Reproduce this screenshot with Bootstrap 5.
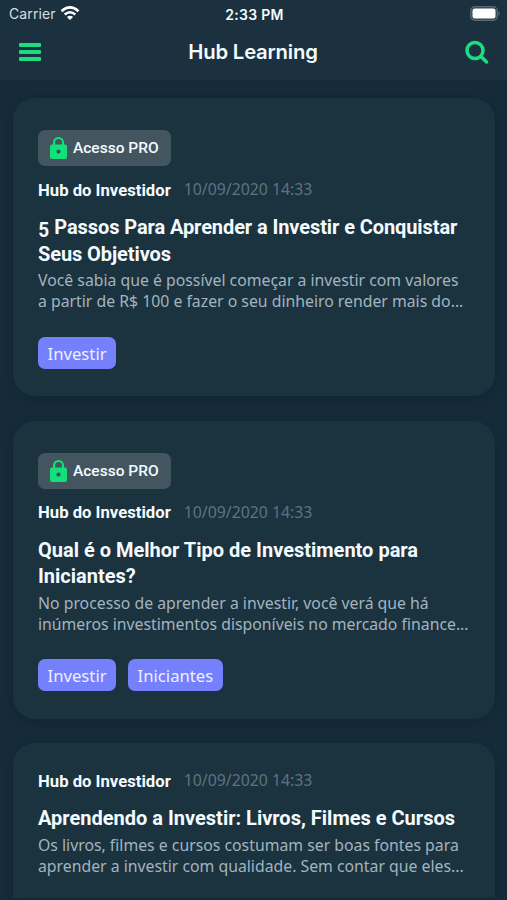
<!DOCTYPE html>
<html lang="pt-BR">
<head>
<meta charset="utf-8">
<meta name="viewport" content="width=device-width, initial-scale=1">
<title>Hub Learning</title>
<link href="https://cdn.jsdelivr.net/npm/bootstrap@5.3.0/dist/css/bootstrap.min.css" rel="stylesheet">
<style>
body{background:#152b3a;color:#f4fbff;font-family:"Noto Sans","Open Sans",sans-serif;height:900px;overflow:hidden}
.top-area{background:#1b313f;height:80px;font-family:Inter,sans-serif}
.status{height:27px;font-size:14px;padding:0 7px 0 9px}
.status>div{flex:1 1 0}
.carrier{color:#d5dfe5;letter-spacing:.1px}
.clock{font-weight:600;font-size:14px;letter-spacing:.3px;padding-top:1px}
.app-bar{height:50px;padding:0 18px 0 19px}
.app-title{font-size:20.3px;font-weight:600;letter-spacing:-.2px}
.feed{padding:18px 12px 0 13px;gap:24.5px;height:820px;overflow:hidden}
.post{background:#1b323f;border-radius:22px;height:298px;padding:32px 25px 0;box-shadow:0 3px 10px rgba(8,24,34,.22);flex:none}
.post-free{padding-top:26px;height:155px;border-bottom-left-radius:0;border-bottom-right-radius:0}
.pro{background:#435660;border-radius:7px;height:36px;width:133px;padding-left:12px;gap:6px;font:500 15.5px Roboto,sans-serif;margin-bottom:12px}
.meta{height:24px;gap:13px;font-size:15.8px;color:#5f727e}
.author{font:700 16.7px Roboto,sans-serif;color:#f4fbff}
.headline{font:700 20px/26.5px Roboto,sans-serif;margin:12px 0 3px}
.tight{letter-spacing:-.09px}
.low-digit{display:inline-block;transform:translateY(3px) scaleX(.95)}
.summary{font-size:15.8px;line-height:21.3px;color:#a3b4bf;margin:0 0 24px}
.headline,.summary{white-space:nowrap}
.tags{gap:12px}
.tag{background:#7480fc;color:#edf0ff;border-radius:7px;height:32px;padding:1px 9.500px 0;font-size:16.7px}
</style>
</head>
<body>
<header class="top-area">
  <div class="status d-flex align-items-center">
    <div class="d-flex align-items-center gap-1"><span class="carrier">Carrier</span>
      <svg width="20" height="15" viewBox="0 0 20 15" fill="none" stroke="#fff" stroke-width="2.5"><path d="M1.5 5.2Q10-2.4 18.500 5.2M4.700 8.500Q10 3.900 15.300 8.500"/><path d="M10 14 6.900 10.900Q10 8.400 13.100 10.900Z" fill="#fff" stroke="none"/></svg>
    </div>
    <span class="clock">2:33 PM</span>
    <div class="d-flex justify-content-end">
      <svg width="30" height="15" viewBox="0 0 30 15"><rect x=".7" y=".7" width="26.600" height="13.600" rx="4.300" fill="#31444f" stroke="#5b6b75" stroke-width="1.200"/><rect x="2.500" y="2.500" width="23" height="10" rx="2.500" fill="#fff"/><path d="M28.500 5Q31 7.500 28.500 10Z" fill="#64747e"/></svg>
    </div>
  </div>
  <nav class="app-bar d-flex align-items-center justify-content-between">
    <svg width="22" height="20" viewBox="0 0 22 20" fill="#1cdb83"><rect y="1" width="22" height="4" rx="1"/><rect y="8" width="22" height="4" rx="1"/><rect y="15" width="22" height="4" rx="1"/></svg>
    <span class="app-title">Hub Learning</span>
    <svg width="24" height="24" viewBox="0 0 24 24" fill="none" stroke="#1cdb83" stroke-width="3.500" stroke-linecap="round"><circle cx="10" cy="10.500" r="8"/><path d="m16 16.500 5.500 5.500"/></svg>
  </nav>
</header>
<main class="feed d-flex flex-column">
  <article class="post">
    <div class="pro d-flex align-items-center"><svg width="17" height="22" viewBox="0 0 17 22"><path d="M4 9V5.500a4.500 4.500 0 0 1 9 0V9" fill="none" stroke="#12e07a" stroke-width="2"/><rect y="7.500" width="17" height="14.500" rx="2" fill="#12e07a"/><circle cx="8.500" cy="14.600" r="2.100" fill="#35594f"/></svg><span>Acesso PRO</span></div>
    <div class="meta d-flex align-items-center"><span class="author">Hub do Investidor</span><span>10/09/2020 14:33</span></div>
    <h2 class="headline tight"><span class="low-digit">5</span> Passos Para Aprender a Investir e Conquistar<br>Seus Objetivos</h2>
    <p class="summary">Você sabia que é possível começar a investir com valores<br>a partir de R$ 100 e fazer o seu dinheiro render mais do...</p>
    <div class="tags d-flex"><span class="tag d-flex align-items-center">Investir</span></div>
  </article>
  <article class="post">
    <div class="pro d-flex align-items-center"><svg width="17" height="22" viewBox="0 0 17 22"><path d="M4 9V5.500a4.500 4.500 0 0 1 9 0V9" fill="none" stroke="#12e07a" stroke-width="2"/><rect y="7.500" width="17" height="14.500" rx="2" fill="#12e07a"/><circle cx="8.500" cy="14.600" r="2.100" fill="#35594f"/></svg><span>Acesso PRO</span></div>
    <div class="meta d-flex align-items-center"><span class="author">Hub do Investidor</span><span>10/09/2020 14:33</span></div>
    <h2 class="headline">Qual é o Melhor Tipo de Investimento para<br>Iniciantes?</h2>
    <p class="summary">No processo de aprender a investir, você verá que há<br>inúmeros investimentos disponíveis no mercado finance...</p>
    <div class="tags d-flex"><span class="tag d-flex align-items-center">Investir</span><span class="tag d-flex align-items-center">Iniciantes</span></div>
  </article>
  <article class="post post-free">
    <div class="meta d-flex align-items-center"><span class="author">Hub do Investidor</span><span>10/09/2020 14:33</span></div>
    <h2 class="headline">Aprendendo a Investir: Livros, Filmes e Cursos</h2>
    <p class="summary">Os livros, filmes e cursos costumam ser boas fontes para<br>aprender a investir com qualidade. Sem contar que eles...</p>
  </article>
</main>
<script src="https://cdn.jsdelivr.net/npm/bootstrap@5.3.0/dist/js/bootstrap.bundle.min.js"></script>
</body>
</html>
